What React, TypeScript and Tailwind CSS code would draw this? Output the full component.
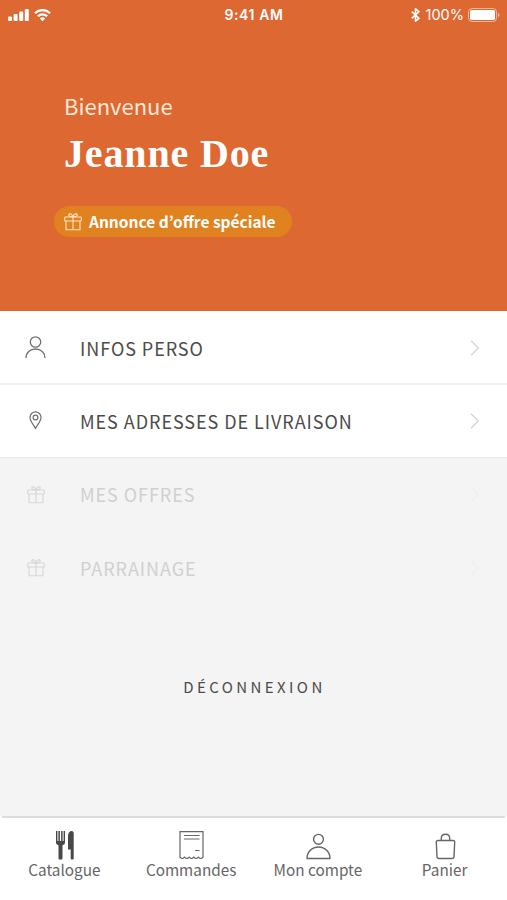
import type { ReactNode } from "react";

const GiftIcon = ({ className }: { className?: string }) => (
  <svg className={className} viewBox="0 0 18 18" fill="none" stroke="currentColor" strokeWidth="1.1" strokeLinejoin="round">
    <rect x="0.7" y="4" width="16.6" height="4" rx="0.8" />
    <path d="M2 8v8.7h14V8M9 4v12.7" />
    <path d="M9 4C6.5 4 4.2 3 4.8 1.6 5.5 0 8.4 1 9 4ZM9 4C11.5 4 13.8 3 13.2 1.6 12.5 0 9.6 1 9 4Z" />
  </svg>
);

const PersonIcon = () => (
  <svg className="h-[23px] w-[21px]" viewBox="0 0 21 23" fill="none" stroke="currentColor" strokeWidth="1.3">
    <circle cx="10.5" cy="6" r="5.2" />
    <path d="M1 22c0-5.5 4-9 9.5-9s9.5 3.5 9.5 9" />
  </svg>
);

const PinIcon = () => (
  <svg className="mb-px h-[19px] w-[13px]" viewBox="0 0 13 19" fill="none" stroke="currentColor" strokeWidth="1.2">
    <path d="M6.5 17.5C4.5 13.5 1 10 1 6.4a5.5 5.5 0 0 1 11 0C12 10 8.5 13.5 6.5 17.5Z" />
    <circle cx="6.5" cy="6.5" r="2.4" />
  </svg>
);

const Chevron = () => (
  <svg className="h-4 w-[10px]" viewBox="0 0 10 16" fill="none" stroke="currentColor" strokeWidth="1.4">
    <path d="M1 0.8 8.3 8 1 15.2" />
  </svg>
);

const CutleryIcon = () => (
  <svg className="h-[30px] w-[20px]" viewBox="0 0 20 30" fill="currentColor">
    <path d="M1 1h1.4v10h1V1h1.5v10h1.2V1h1.5v10h1V1H10v11.5c0 1.5-1 2.2-2.5 2.7V28.5a1 1 0 0 1-1 1h-2a1 1 0 0 1-1-1V15.2C2 14.7 1 14 1 12.5Z" />
    <path d="M13 19.5V6c0-3 1.5-5 3.500-5 1.600 0 2.200 1 2.200 2.500v25a1 1 0 0 1-1 1h-1a1 1 0 0 1-1-1v-9Z" />
  </svg>
);

const ReceiptIcon = () => (
  <svg className="h-[30px] w-[25px]" viewBox="0 0 25 30" fill="none" stroke="currentColor" strokeWidth="1.2">
    <path d="M1 27.200V1.600h23v25.600q-2.300 2.600-4.600 0-2.300 2.600-4.600 0-2.300 2.600-4.600 0-2.300 2.600-4.600 0-2.300 2.600-4.600 0Z" />
    <path d="M5 5.5h15.500M5 9h15.500M16 20.5h4.500" />
  </svg>
);

const AccountIcon = () => (
  <svg className="h-[27px] w-[25px]" viewBox="0 0 25 27" fill="none" stroke="currentColor" strokeWidth="1.4" strokeLinejoin="round">
    <circle cx="12.5" cy="6.3" r="4.9" />
    <path d="M1 25.5c0-6.5 5-11.5 11.5-11.5S24 19 24 25.5Z" />
  </svg>
);

const BagIcon = () => (
  <svg className="h-[27px] w-[21px]" viewBox="0 0 21 27" fill="none" stroke="currentColor" strokeWidth="1.4">
    <path d="M3 7.5h15c1.2 0 1.8.7 1.7 1.8L19 23.5c-.1 1.3-.8 2-2 2H4c-1.2 0-1.900-.7-2-2L1.300 9.300C1.200 8.200 1.800 7.500 3 7.500Z" />
    <path d="M6.3 7.5V5.3c0-5.5 8.4-5.5 8.4 0v2.200" />
  </svg>
);

const StatusBar = () => (
  <div className="grid h-[30px] grid-cols-3 items-center pl-2 pr-[7px] font-['Inter',sans-serif] text-[14px] leading-none">
    <div className="flex items-center gap-[5px]">
      <svg className="h-[13px] w-[21px]" viewBox="0 0 21 13" fill="currentColor">
        <rect x="0" y="7.5" width="4" height="4.5" rx="1" />
        <rect x="5.6" y="5" width="4" height="7" rx="1" />
        <rect x="11.2" y="2.5" width="4" height="9.5" rx="1" />
        <rect x="16.8" y="0" width="4" height="12" rx="1" />
      </svg>
      <svg className="h-[13px] w-[17px]" viewBox="0 0 17 13" fill="none" stroke="currentColor" strokeWidth="2.3">
        <path d="M1 4.2a10.6 10.6 0 0 1 15 0M3.9 7.3a6.5 6.5 0 0 1 9.2 0" />
        <path d="M8.5 12.2 5.8 9.5a3.8 3.8 0 0 1 5.4 0Z" fill="currentColor" stroke="none" />
      </svg>
    </div>
    <div className="text-center font-semibold tracking-[0.6px]">9:41 AM</div>
    <div className="flex items-center justify-end">
      <svg className="mr-[6px] h-[14px] w-[9px]" viewBox="0 0 9 14" fill="none" stroke="currentColor" strokeWidth="1.6">
        <path d="M0.8 3.7 8 10.3 4.5 13.2V0.8L8 3.7 0.8 10.3" />
      </svg>
      <span className="mr-1 text-[14.5px]">100%</span>
      <svg className="h-[14px] w-[32px]" viewBox="0 0 32 14" fill="none">
        <rect x="0.5" y="0.5" width="28" height="13" rx="3.5" stroke="currentColor" strokeOpacity="0.5" />
        <rect x="2" y="2" width="25" height="10" rx="1.8" fill="currentColor" />
        <path d="M30 4.8c2 .8 2 3.6 0 4.4Z" fill="currentColor" fillOpacity="0.5" />
      </svg>
    </div>
  </div>
);

type RowProps = { icon: ReactNode; label: string; className: string; disabled?: boolean };

const MenuRow = ({ icon, label, className, disabled }: RowProps) => (
  <li className={`flex items-center pr-[27px] ${className}`}>
    <span className={`flex w-[71px] shrink-0 justify-center ${disabled ? "text-[#d6d6d6]" : "text-[#707070]"}`}>{icon}</span>
    <span className={`ml-[9px] flex-1 text-[18px] leading-6 tracking-[0.95px] ${disabled ? "text-[#d0d0d0]" : ""}`}>{label}</span>
    <span className={disabled ? "text-[#efefef]" : "text-[#d6d6d6]"}>
      <Chevron />
    </span>
  </li>
);

const tabs = [
  { label: "Catalogue", icon: <CutleryIcon />, color: "text-[#484848]" },
  { label: "Commandes", icon: <ReceiptIcon />, color: "text-[#666666]" },
  { label: "Mon compte", icon: <AccountIcon />, color: "text-[#666666]" },
  { label: "Panier", icon: <BagIcon />, color: "text-[#666666]" },
];

export default function App() {
  return (
    <div className="flex h-[900px] w-[507px] flex-col overflow-hidden bg-[#f4f4f4] font-['Noto_Sans_CJK_KR',sans-serif] text-[#4b4b4b]">
      <header className="h-[311px] shrink-0 bg-[#de6832] text-white">
        <StatusBar />
        <div className="pl-16 pt-[59px]">
          <p className="text-[22px] leading-8 text-[#fde8d8]">Bienvenue</p>
          <h1 className="mt-[9px] font-['Liberation_Serif',serif] text-[40px] font-bold leading-[48px] tracking-[0.85px]">Jeanne Doe</h1>
        </div>
        <div className="ml-[54px] mt-7 flex h-[31px] w-[238px] items-center rounded-full bg-[#e18220] pl-[10px]">
          <GiftIcon className="h-[18px] w-[18px] text-[#fde4c4]" />
          <span className="mb-0.5 ml-[7px] whitespace-nowrap text-[15.5px] font-bold leading-5">Annonce d’offre spéciale</span>
        </div>
      </header>

      <ul className="shrink-0">
        <MenuRow icon={<PersonIcon />} label="INFOS PERSO" className="h-[74px] border-b-2 border-[#f0f0f0] bg-white pt-px" />
        <MenuRow icon={<PinIcon />} label="MES ADRESSES DE LIVRAISON" className="h-[73px] border-b border-[#e9e9e9] bg-white" />
        <MenuRow icon={<GiftIcon className="mt-0.5 h-[18px] w-[18px]" />} label="MES OFFRES" className="h-[73px] pb-px" disabled />
        <MenuRow icon={<GiftIcon className="mt-px h-[18px] w-[18px]" />} label="PARRAINAGE" className="h-[73px]" disabled />
      </ul>

      <div className="flex flex-1 justify-center pl-0.5 pt-[71px]">
        <button className="h-6 text-[15px] leading-6 tracking-[3.4px]">DÉCONNEXION</button>
      </div>

      <nav className="h-[84px] shrink-0 bg-white">
        <div className="mx-0.5 h-0.5 bg-[#dddddd]" />
        <div className="-mr-px ml-px grid grid-cols-4">
          {tabs.map((tab) => (
            <div key={tab.label} className="flex flex-col items-center">
              <span className={`flex h-[42px] items-end pl-px ${tab.color}`}>{tab.icon}</span>
              <span className="-mt-px whitespace-nowrap text-[15.3px] leading-5 text-[#666666]">{tab.label}</span>
            </div>
          ))}
        </div>
      </nav>
    </div>
  );
}
